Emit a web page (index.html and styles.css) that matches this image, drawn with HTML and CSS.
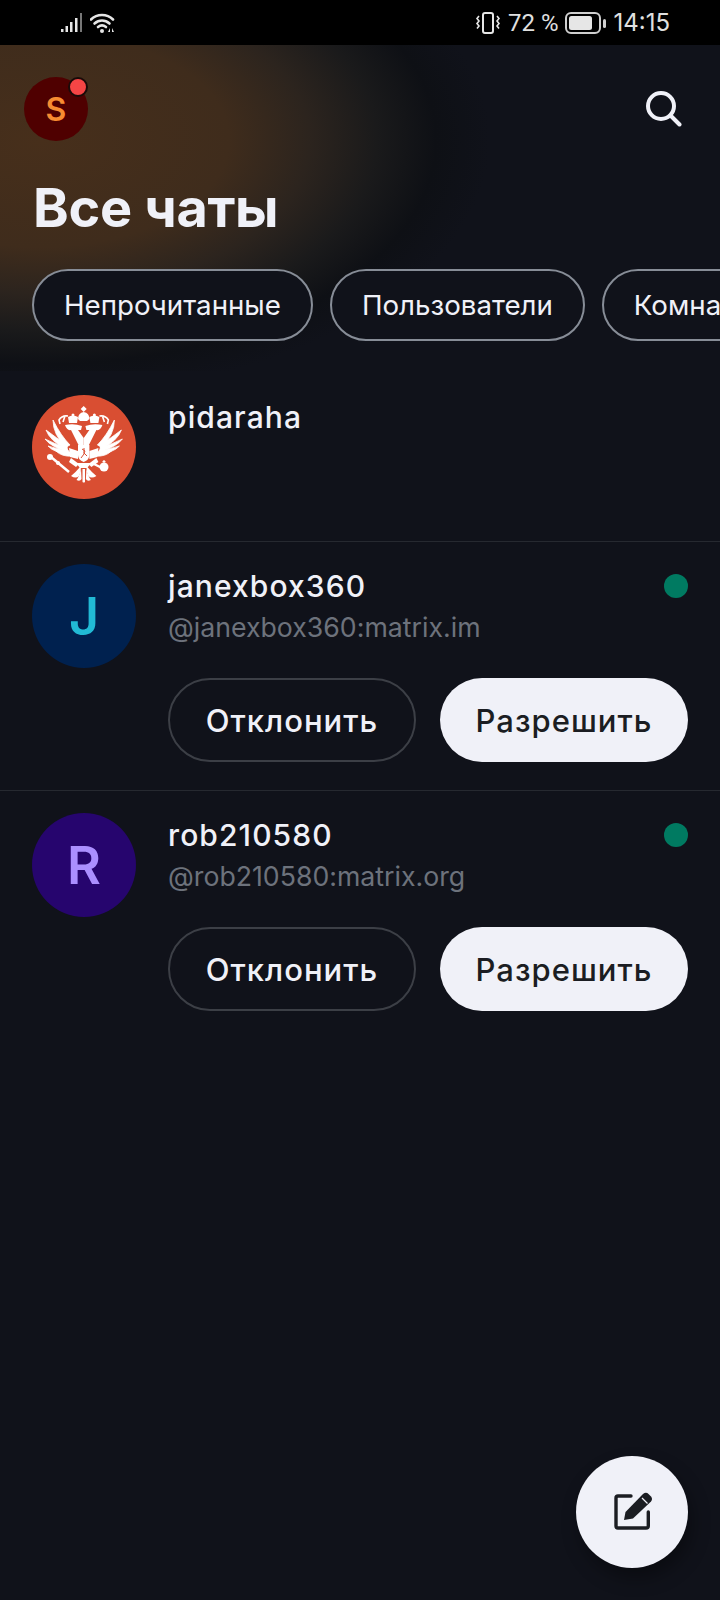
FILE: index.html
```html
<!DOCTYPE html>
<html lang="ru">
<head>
    <meta charset="UTF-8">
    <meta name="viewport" content="width=device-width, initial-scale=1.0">
    <title>Все чаты</title>
    <link rel="stylesheet" href="styles.css">
</head>
<body>

<div class="screen">
    <div class="status-bar">
        <div class="status-left">
            <svg width="24" height="22" viewBox="0 0 24 22">
                <rect x="1" y="17" width="2.500" height="3" fill="#e6e6e6"/>
                <rect x="5.500" y="14" width="2.500" height="6" fill="#e6e6e6"/>
                <rect x="10" y="10" width="2.500" height="10" fill="#e6e6e6"/>
                <rect x="15" y="6" width="2.500" height="14" fill="#e6e6e6"/>
                <rect x="20" y="1" width="2" height="19" fill="#777"/>
            </svg>
            <svg width="28" height="22" viewBox="0 0 28 22">
                <path d="M1 7.500C7 1.500 17 1.500 23 7.500" fill="none" stroke="#e6e6e6" stroke-width="2.600" stroke-linecap="round"/>
                <path d="M4.500 11.500C9 7.500 15 7.500 19.500 11.500" fill="none" stroke="#e6e6e6" stroke-width="2.600" stroke-linecap="round"/>
                <path d="M8 15C10.500 13 13.500 13 16 15" fill="none" stroke="#e6e6e6" stroke-width="2.600" stroke-linecap="round"/>
                <circle cx="12" cy="19" r="2" fill="#e6e6e6"/>
                <path d="M18 20h2v-4zM22 16v4h2z" fill="#e6e6e6"/>
            </svg>
        </div>
        <div class="status-right">
            <svg width="26" height="24" viewBox="0 0 26 24">
                <rect x="8" y="2" width="10" height="20" rx="2" fill="none" stroke="#e6e6e6" stroke-width="2"/>
                <path d="M4 5l-2 2.500 2 2.500-2 2.500 2 2.500-2 2.500M22 5l2 2.500-2 2.500 2 2.500-2 2.500 2 2.500" fill="none" stroke="#e6e6e6" stroke-width="1.600"/>
            </svg>
            <span class="battery-text">72 %</span>
            <svg width="42" height="24" viewBox="0 0 42 24">
                <rect x="1" y="2" width="34" height="20" rx="5" fill="none" stroke="#cfcfcf" stroke-width="2"/>
                <rect x="4" y="5" width="23" height="14" rx="2.500" fill="#e6e6e6"/>
                <rect x="38" y="8" width="3" height="9" rx="1.500" fill="#cfcfcf"/>
            </svg>
            <span class="clock">14:15</span>
        </div>
    </div>

    <div class="header">
        <div class="top-row">
            <div class="me-avatar">
                S
                <span class="me-dot"></span>
            </div>
            <svg width="36" height="36" viewBox="0 0 36 36">
                <circle cx="15" cy="15" r="13" fill="none" stroke="#f0f1f8" stroke-width="4"/>
                <path d="M25 25l8.500 8.500" stroke="#f0f1f8" stroke-width="4" stroke-linecap="round"/>
            </svg>
        </div>
        <h1 class="title">Все чаты</h1>
        <div class="filters">
            <div class="chip">Непрочитанные</div>
            <div class="chip">Пользователи</div>
            <div class="chip">Комнаты</div>
        </div>
    </div>

    <div class="list">
        <div class="row row-first">
            <div class="avatar avatar-emblem">
                <svg width="104" height="104" viewBox="0 0 104 104">
                    <defs>
                        <g id="half" fill="#fff">
                            <!-- wing -->
                            <g stroke="#fff" stroke-width="0.800" stroke-linejoin="round">
                                <path d="M38 50Q29 41 21 25Q21 40 34 52Z"/>
                                <path d="M36 50Q24 43 14 35Q18 46 34 54Z"/>
                                <path d="M35 52Q22 49 13 44Q19 52 36 57Z"/>
                                <path d="M36 55Q24 54 16 51Q22 58 38 59Z"/>
                                <path d="M38 57Q30 57 24 56Q30 62 40 61Z"/>
                            </g>
                            <path d="M37 53L46 56V64L38 62Z"/>
                            <!-- head and neck -->
                            <path d="M33 30Q42 28 50 31L49 35H46L51.700 43V51H47L39 35Q35 36 33 30Z"/>
                            <!-- crown -->
                            <path d="M36 22Q41 19 46 22L45 28H37Z"/>
                            <circle cx="41" cy="20" r="1.500"/>
                            <path d="M36 21Q30 20 27 25L28 29M33 21L31 27" fill="none" stroke="#fff" stroke-width="1.600"/>
                            <!-- leg and tail -->
                            <path d="M39 63L47 69L44 72L37 67Z"/>
                            <path d="M48 72Q43 78 39 81Q44 84 47 81Q49 77 49 72Z"/>
                            <path d="M49 74Q47 82 44.500 85Q48 87 49.500 84Z"/>
                        </g>
                    </defs>
                    <use href="#half"/>
                    <use href="#half" transform="matrix(-1 0 0 1 103.400 0)"/>
                    <path d="M51.700 11l3 3-3 3-3-3z" fill="#fff"/>
                    <path d="M46 24Q46 18 51.700 17Q57.400 18 57.400 24L55 26H48Z" fill="#fff"/>
                    <path d="M46 50H57.400V60Q57.400 65 51.700 67Q46 65 46 60Z" fill="#fff"/>
                    <path d="M50 54l3 2-1 2 3 3M52 53v6l-3 4" fill="none" stroke="#d94e32" stroke-width="1"/>
                    <path d="M44 68H59.400L55 73H48Z" fill="#fff"/>
                    <path d="M50.500 74H53V87Q51.700 88 50.500 87Z" fill="#fff"/>
                    <!-- sceptre -->
                    <circle cx="18" cy="62" r="3" fill="#fff"/>
                    <circle cx="26" cy="68" r="2" fill="#fff"/>
                    <path d="M19 62L37 77" stroke="#fff" stroke-width="2.500"/>
                    <!-- orb -->
                    <circle cx="72" cy="72" r="4.500" fill="#fff"/>
                    <path d="M72 65v4M70.500 66.500h3" stroke="#fff" stroke-width="1.200"/>
                    <path d="M60 68L70 73" stroke="#fff" stroke-width="2.500"/>
                </svg>
            </div>
            <div class="row-body">
                <div class="name">pidaraha</div>
            </div>
        </div>

        <div class="row">
            <div class="avatar avatar-j">J</div>
            <div class="row-body">
                <div class="name-line">
                    <div class="name">janexbox360</div>
                    <span class="online"></span>
                </div>
                <div class="handle">@janexbox360:matrix.im</div>
                <div class="actions">
                    <div class="btn btn-outline">Отклонить</div>
                    <div class="btn btn-solid">Разрешить</div>
                </div>
            </div>
        </div>

        <div class="row row-last">
            <div class="avatar avatar-r">R</div>
            <div class="row-body">
                <div class="name-line">
                    <div class="name">rob210580</div>
                    <span class="online"></span>
                </div>
                <div class="handle">@rob210580:matrix.org</div>
                <div class="actions">
                    <div class="btn btn-outline">Отклонить</div>
                    <div class="btn btn-solid">Разрешить</div>
                </div>
            </div>
        </div>
    </div>

    <div class="fab">
        <svg width="44" height="44" viewBox="0 0 44 44">
            <path d="M21 6H8Q6 6 6 8V36Q6 38 8 38H36Q38.300 38 38.300 36V22" fill="none" stroke="#1b1d22" stroke-width="3.400" stroke-linecap="round"/>
            <path d="M14 30L15.500 22L33 4Q36 1.500 38.500 4L41 6.500Q43 9 41 11.500L23 28.500Z" fill="#1b1d22"/>
            <path d="M32 8L37.500 13.500" stroke="#f0f1f8" stroke-width="1.200"/>
        </svg>
    </div>
</div>

</body>
</html>
```

FILE: styles.css
```css
* {
    box-sizing: border-box;
}

html, body {
    margin: 0;
    padding: 0;
    background-color: #10121a;
}

body {
    font-family: Inter, "Noto Sans", sans-serif;
}

.screen {
    position: relative;
    width: 720px;
    height: 1600px;
    overflow: hidden;
    background-color: #10121a;
    color: #f0f1f8;
}

.status-bar {
    height: 45px;
    background-color: #000;
    color: #e0e0e0;
    display: flex;
    justify-content: space-between;
    align-items: center;
    padding: 0 50px 0 60px;
    font-size: 24px;
}

.status-left {
    display: flex;
    align-items: center;
    gap: 6px;
}

.status-right {
    display: flex;
    align-items: center;
    gap: 7px;
}

.battery-text {
    font-family: Roboto, sans-serif;
    font-size: 24px;
}

.clock {
    margin-left: -1px;
}

.header {
    height: 326px;
    padding: 32px 0 0 32px;
    background: radial-gradient(ellipse 450px 255px at 40px 95px, #472f1b 0%, #3f2c1c 42%, #2c241e 60%, #1a1a1b 75%, #0e1015 88%, #10121a 100%);
}

.top-row {
    display: flex;
    justify-content: space-between;
    align-items: flex-start;
    padding: 0 38px 0 0;
    margin-left: -8px;
}

.top-row svg {
    margin-top: 14px;
}

.me-avatar {
    position: relative;
    width: 64px;
    height: 64px;
    border-radius: 50%;
    background-color: #4f0000;
    color: #f78c32;
    font-size: 32px;
    font-weight: 600;
    display: flex;
    align-items: center;
    justify-content: center;
}

.me-dot {
    position: absolute;
    top: 0;
    right: 0;
    width: 20px;
    height: 20px;
    border-radius: 50%;
    background-color: #f54545;
    border: 2px solid #1a0a08;
}

.title {
    margin: 36px 0 0 1px;
    font-size: 54px;
    line-height: 62px;
    letter-spacing: -0.3px;
    font-weight: 700;
}

.filters {
    display: flex;
    gap: 17px;
    margin-top: 30px;
}

.chip {
    flex: none;
    height: 72px;
    padding: 0 30px;
    border: 2px solid #878d97;
    border-radius: 36px;
    background-color: #10121a;
    font-size: 27.7px;
    display: flex;
    align-items: center;
}

.row {
    display: flex;
    gap: 32px;
    padding: 22px 32px 28px;
    border-bottom: 1px solid #262930;
}

.row-first {
    height: 171px;
    padding-top: 24px;
}

.row-last {
    border-bottom: none;
}

.avatar {
    flex: none;
    width: 104px;
    height: 104px;
    border-radius: 50%;
    display: flex;
    align-items: center;
    justify-content: center;
    font-size: 52px;
    font-weight: 600;
}

.avatar-emblem {
    background-color: #d94e32;
}

.avatar-j {
    background-color: #00214f;
    color: #21bad5;
}

.avatar-r {
    background-color: #26056e;
    color: #ab8fff;
}

.row-body {
    flex: 1;
    min-width: 0;
}

.name-line {
    display: flex;
    justify-content: space-between;
    align-items: center;
}

.name {
    font-size: 30px;
    line-height: 44px;
    letter-spacing: 1.1px;
    font-weight: 450;
}

.online {
    width: 24px;
    height: 24px;
    border-radius: 50%;
    background-color: #007a61;
}

.handle {
    font-size: 26.7px;
    line-height: 38px;
    color: #6d727c;
}

.actions {
    display: flex;
    gap: 24px;
    margin-top: 32px;
}

.btn {
    flex: none;
    width: 248px;
    height: 84px;
    border-radius: 42px;
    display: flex;
    align-items: center;
    justify-content: center;
    font-size: 31px;
    letter-spacing: 1px;
    font-weight: 450;
}

.btn-outline {
    border: 2px solid #3c3f46;
}

.btn-solid {
    background-color: #f0f1f8;
    color: #1b1d22;
}

.fab {
    position: absolute;
    right: 32px;
    bottom: 32px;
    width: 112px;
    height: 112px;
    border-radius: 50%;
    background-color: #f0f1f8;
    box-shadow: 4px 10px 18px rgba(0, 0, 0, 0.35);
    display: flex;
    align-items: center;
    justify-content: center;
}
```
